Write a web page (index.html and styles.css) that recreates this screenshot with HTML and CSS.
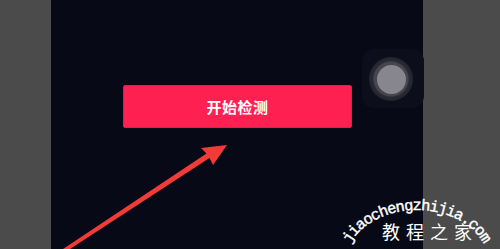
FILE: index.html
```html
<!DOCTYPE html>
<html lang="zh">
<head>
<meta charset="utf-8">
<link rel="stylesheet" href="styles.css">
</head>
<body>
<div class="stage">
  <div class="panel">
    <button class="start-btn">开始检测</button>
    <div class="float-btn">
      <div class="ring"><div class="knob"></div></div>
    </div>
  </div>
  <svg class="arrow" width="500" height="249" viewBox="0 0 500 249">
    <polygon points="227,145 201,148 206.5,153.5 63,249 70,249 209.5,158 213,165" fill="#f23b37"/>
  </svg>
  <svg class="watermark" width="500" height="249" viewBox="0 0 500 249">
    <defs>
      <path id="arc" d="M 345 264 A 72 54 0 0 1 489 264"/>
    </defs>
    <text class="wm-arc" text-anchor="middle"><textPath href="#arc" startOffset="99">jiaochengzhijia.com</textPath></text>
    <text class="wm-cn" x="382" y="239">教程之家</text>
  </svg>
</div>
</body>
</html>
```
FILE: styles.css
```css
html, body {
  margin: 0;
  padding: 0;
}
body {
  width: 500px;
  height: 249px;
  overflow: hidden;
  background: #4b4b4b;
}
.stage {
  position: relative;
  width: 500px;
  height: 249px;
  display: flex;
}
.panel {
  position: relative;
  margin-left: 51px;
  width: 372px;
  height: 249px;
  background: #080916;
  padding: 85px 0 0 72px;
  box-sizing: border-box;
}
.start-btn {
  display: flex;
  align-items: center;
  justify-content: center;
  width: 229px;
  height: 43px;
  border: 1px solid #e31e4b;
  border-radius: 2px;
  background: #fe2051;
  color: #fff;
  font-family: "Noto Sans CJK SC", "Noto Sans", sans-serif;
  font-size: 15px;
  font-weight: 700;
  letter-spacing: 0.5px;
  padding: 0 0 1px 0;
  box-sizing: border-box;
}
.float-btn {
  position: absolute;
  left: 311px;
  top: 49px;
  width: 62px;
  height: 59px;
  border-radius: 12px;
  background: #0d0e1b;
  display: flex;
  align-items: center;
  justify-content: center;
  padding-right: 4px;
  padding-top: 1px;
  box-sizing: border-box;
}
.ring {
  width: 44px;
  height: 44px;
  border-radius: 50%;
  background: radial-gradient(circle, #45454e 0, #45454e 17px, #2b2b35 18px, #23232c 22px);
  display: flex;
  align-items: center;
  justify-content: center;
}
.knob {
  width: 29px;
  height: 29px;
  border-radius: 50%;
  background: #86868c;
}
.arrow, .watermark {
  position: absolute;
  left: 0;
  top: 0;
  pointer-events: none;
}
.wm-arc {
  font-family: "Liberation Mono", "DejaVu Sans Mono", monospace;
  font-size: 15.5px;
  letter-spacing: -1.1px;
  fill: #ffffff;
  stroke: #ffffff;
  stroke-width: 0.4px;
}
.wm-cn {
  font-family: "Noto Sans CJK SC", sans-serif;
  font-size: 18px;
  letter-spacing: 6px;
  fill: #ffffff;
}
```
